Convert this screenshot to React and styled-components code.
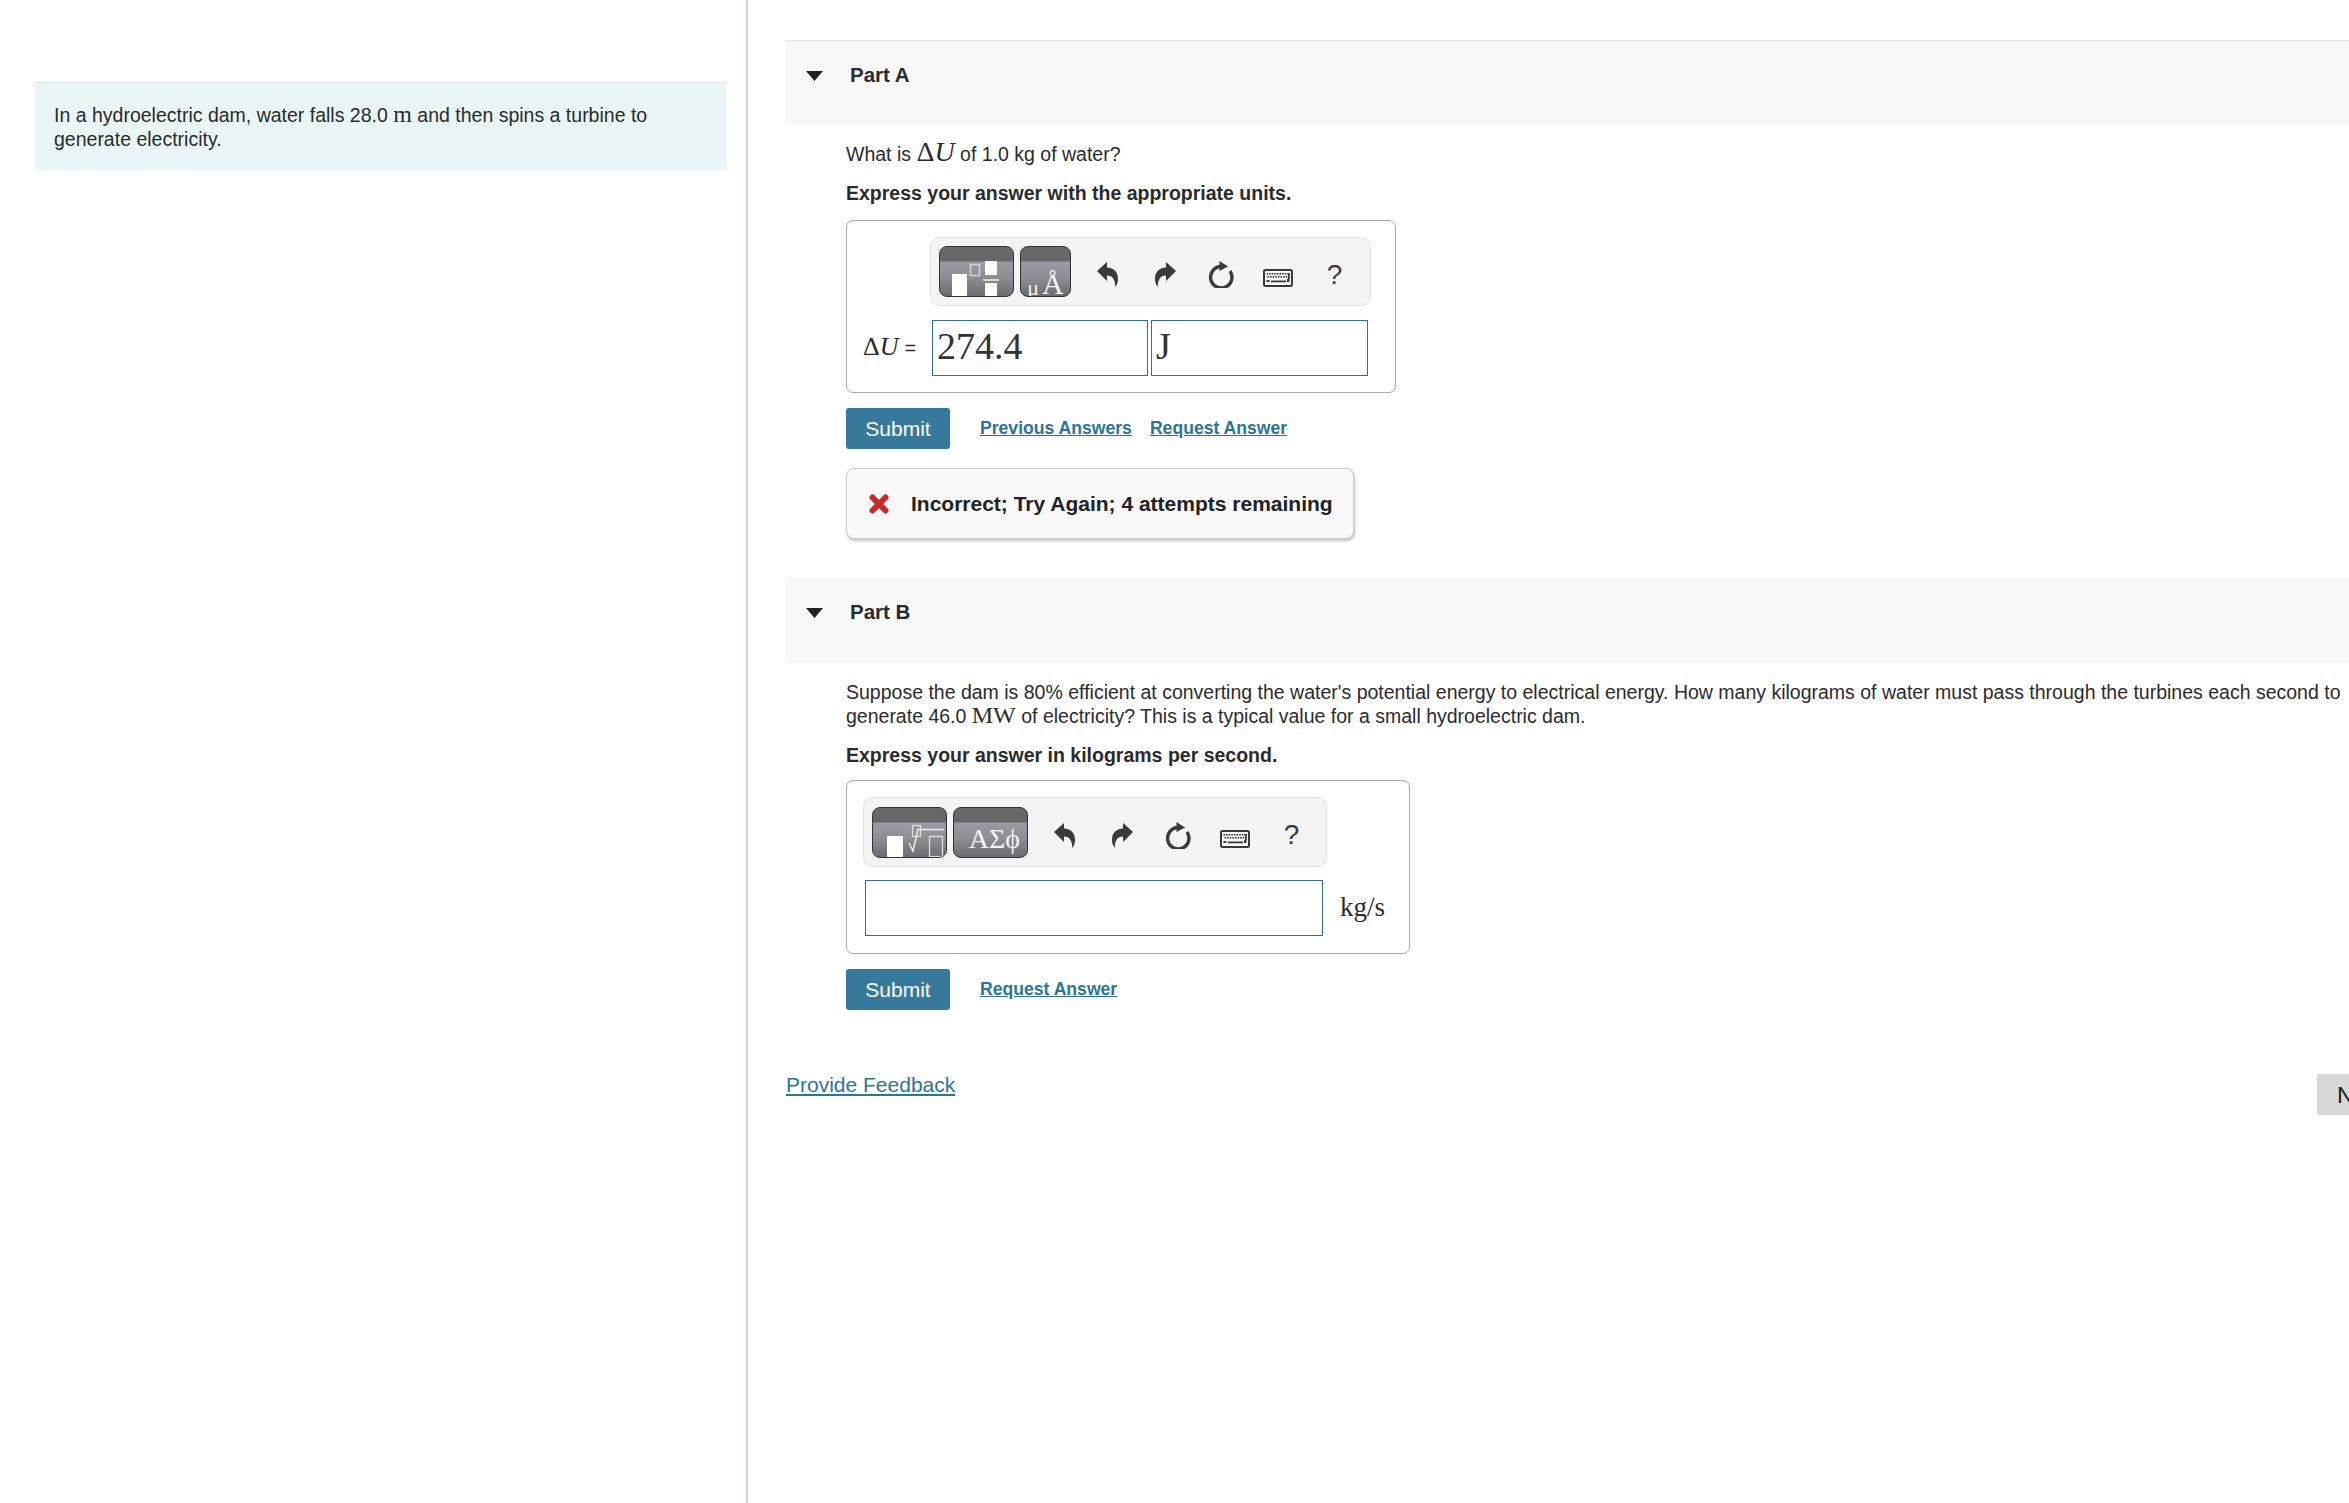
import React from "react";
import styled, { createGlobalStyle } from "styled-components";

const GlobalStyle = createGlobalStyle`
  html, body {
    margin: 0;
    padding: 0;
    background: #fff;
    overflow: hidden;
  }
  body {
    font-family: "Liberation Sans", Arial, sans-serif;
    font-size: 19.5px;
    line-height: 24px;
    color: #2b2b2b;
  }
`;

const Page = styled.div`
  display: flex;
  width: 2349px;
  height: 1503px;
  overflow: hidden;
`;

const Side = styled.aside`
  flex: 0 0 748px;
  box-sizing: border-box;
  height: 100%;
  padding: 82px 20px 0 35px;
  border-right: 2px solid #c6d8e4;
`;

const Intro = styled.div`
  box-sizing: border-box;
  height: 88px;
  padding: 20px 19px 0;
  background: #e9f5f7;
  border-top: 1px solid #dfe6e8;
`;

const Main = styled.main`
  flex: 0 0 1654px;
  padding: 40px 0 0 38px;
  box-sizing: border-box;
`;

const PartHeader = styled.div`
  display: flex;
  align-items: flex-start;
  gap: 27px;
  height: 85px;
  box-sizing: border-box;
  padding: 22px 0 0 20px;
  background: #f8f8f8;
  border-top: ${({ $ruled }) => ($ruled ? "1px solid #e0e2e2" : "none")};
  margin-top: ${({ $ruled }) => ($ruled ? "0" : "39px")};
  font-size: 20.5px;
  font-weight: bold;
  color: #2b2b2b;
`;

const Caret = styled.svg`
  width: 17px;
  height: 10px;
  margin-top: 8px;
  fill: #222;
`;

const PartBody = styled.div`
  padding: 17px 0 0 60px;
  width: 1500px;
`;

const Prompt = styled.p`
  margin: 0 0 15px;
`;

const Instruction = styled.p`
  margin: 0 0 ${({ $after }) => $after}px;
  font-weight: bold;
`;

const MathText = styled.span`
  font-family: "Liberation Serif", "Times New Roman", serif;
  font-size: ${({ $size }) => $size || "24px"};
  line-height: 0;
  font-style: ${({ $italic }) => ($italic ? "italic" : "normal")};
`;

const AnswerBox = styled.div`
  display: flex;
  flex-direction: column;
  gap: ${({ $gap }) => $gap}px;
  box-sizing: border-box;
  width: ${({ $width }) => $width}px;
  height: ${({ $height }) => $height}px;
  padding: 16px;
  border: 1px solid #aaa;
  border-radius: 7px;
`;

const Toolbar = styled.div`
  display: flex;
  align-items: center;
  gap: 6px;
  box-sizing: border-box;
  flex: none;
  width: ${({ $width }) => $width}px;
  height: ${({ $height }) => $height}px;
  margin-left: ${({ $indent }) => $indent || 0}px;
  padding: 0 8px;
  background: #f4f4f4;
  border: 1px solid #e2e2e2;
  border-radius: 10px;
`;

const TemplateButton = styled.div`
  display: flex;
  align-items: flex-end;
  justify-content: ${({ $align }) => $align || "center"};
  gap: ${({ $gap }) => $gap || 0}px;
  box-sizing: border-box;
  flex: 0 0 ${({ $width }) => $width}px;
  height: 51px;
  overflow: hidden;
  background: linear-gradient(#6a6a6a 0, #666 14px, #9b99a2 15px, #8f8e95 30px, #6c6b70 100%);
  border: 1px solid #333;
  border-radius: 8px;
  color: #f4f4f4;
  font-family: "Liberation Serif", "Times New Roman", serif;
`;

const TemplateArt = styled.svg`
  display: block;
  width: 100%;
  height: 100%;
`;

const UnitGlyph = styled.span`
  font-size: ${({ $size }) => $size}px;
  line-height: ${({ $line }) => $line}px;
  margin-bottom: ${({ $lift }) => $lift || 0}px;
`;

const ToolIcons = styled.div`
  display: grid;
  grid-template-columns: 59px 56px 56px 57px 57px;
  align-items: center;
  justify-items: center;
  height: 51px;
  margin-left: 1px;
  padding-top: 6px;
  box-sizing: border-box;
  color: #3a3a3a;
`;

const ToolIcon = styled.svg`
  display: block;
  width: ${({ $w }) => $w}px;
  height: ${({ $h }) => $h}px;
  margin-top: ${({ $top }) => $top || 0}px;
`;

const HelpMark = styled.span`
  font-size: 28px;
  line-height: 28px;
  color: #3a3a3a;
`;

const InputRow = styled.div`
  display: flex;
  align-items: center;
  height: 56px;
`;

const InputLabel = styled.div`
  flex: 0 0 69px;
  box-sizing: border-box;
  white-space: nowrap;
  display: flex;
  align-items: baseline;
  gap: 6px;
`;

const SmallEquals = styled.span`
  font-size: 20px;
`;

const Field = styled.div`
  box-sizing: border-box;
  flex: 0 0 ${({ $width }) => $width}px;
  height: 56px;
  margin-left: ${({ $gap }) => $gap || 0}px;
  padding-left: 4px;
  border: 1px solid #2f7299;
  font-family: "Liberation Serif", "Times New Roman", serif;
  font-size: 38px;
  line-height: 50px;
  color: #333;
`;

const UnitText = styled.span`
  margin: 0 0 2px 17px;
  font-family: "Liberation Serif", "Times New Roman", serif;
  font-size: 27px;
`;

const Actions = styled.div`
  display: flex;
  align-items: flex-start;
  margin-top: 15px;
`;

const SubmitButton = styled.button`
  width: 104px;
  height: 41px;
  padding: 0;
  border: none;
  border-radius: 3px;
  background: #37799c;
  color: #fff;
  font-family: inherit;
  font-size: 21px;
`;

const ActionLink = styled.a`
  margin: 8px 18px 0 0;
  font-size: 17.6px;
  font-weight: bold;
  color: #2b7598;
  text-decoration: underline;
  &:first-of-type {
    margin-left: 30px;
  }
`;

const Feedback = styled.div`
  display: flex;
  align-items: center;
  gap: 22px;
  box-sizing: border-box;
  width: 508px;
  height: 71px;
  margin-top: 19px;
  padding-left: 22px;
  background: #f9f9f9;
  border: 1px solid #ccc;
  border-radius: 8px;
  box-shadow: 1px 2px 3px rgba(0, 0, 0, 0.25);
  font-size: 21px;
  font-weight: bold;
  color: #222;
  white-space: nowrap;
`;

const CrossIcon = styled.svg`
  flex: none;
  width: 20px;
  height: 20px;
`;

const Footer = styled.div`
  display: flex;
  justify-content: space-between;
  align-items: flex-start;
  margin-top: 63px;
`;

const FeedbackLink = styled.a`
  font-size: 21px;
  color: #2b7598;
  text-decoration: underline;
`;

const NextButton = styled.button`
  width: 85px;
  height: 41px;
  margin-top: 1px;
  padding: 0 0 0 20px;
  text-align: left;
  border: none;
  border-radius: 3px;
  background: #d8d8d8;
  color: #222;
  font-family: "Inter", "Liberation Sans", sans-serif;
  font-size: 22px;
`;

function UndoIcon({ flip }) {
  return (
    <ToolIcon $w={21} $h={25} viewBox="0 0 21 25" fill="currentColor">
      <path
        transform={flip ? "translate(21 0) scale(-1 1)" : undefined}
        d="M0 9 L10 0 V5.5 C17 6 21 10 21 17 C21 20 20 23 18 25 C18.5 20 17 13.5 10 13.5 V19 Z"
      />
    </ToolIcon>
  );
}

function ResetIcon() {
  return (
    <ToolIcon $w={26} $h={27} viewBox="0 0 26 27">
      <path
        d="M13 5.5 A10.7 10.7 0 1 0 22 10"
        fill="none"
        stroke="currentColor"
        strokeWidth="3.4"
      />
      <path d="M11.5 0 L20 5.5 L11.5 10 Z" fill="currentColor" />
    </ToolIcon>
  );
}

function KeyboardIcon() {
  const keys = [];
  for (let i = 0; i < 9; i++) keys.push(<rect key={"a" + i} x={3.5 + i * 2.6} y="4" width="1.6" height="1.6" />);
  for (let i = 0; i < 8; i++) keys.push(<rect key={"b" + i} x={4.5 + i * 2.6} y="7" width="1.6" height="1.6" />);
  return (
    <ToolIcon $w={30} $h={18} $top={7} viewBox="0 0 30 18" fill="currentColor">
      <rect x="1" y="1" width="28" height="16" rx="1.5" fill="#fafafa" stroke="currentColor" strokeWidth="2" />
      {keys}
      <rect x="3.5" y="11" width="3" height="2" />
      <rect x="8" y="11.5" width="15" height="1.8" />
      <rect x="24" y="10" width="2.5" height="3" />
      <rect x="25" y="4" width="1.8" height="6" />
    </ToolIcon>
  );
}

function ToolGroup() {
  return (
    <ToolIcons>
      <UndoIcon />
      <UndoIcon flip />
      <ResetIcon />
      <KeyboardIcon />
      <HelpMark>?</HelpMark>
    </ToolIcons>
  );
}

function FractionArt() {
  return (
    <TemplateArt viewBox="0 0 73 49">
      <rect x="12" y="27" width="15" height="22" fill="#fff" />
      <rect x="30.5" y="17.5" width="9" height="11" fill="none" stroke="#d4d4d4" strokeWidth="1.5" />
      <rect x="45" y="14" width="12" height="14" fill="#fff" />
      <rect x="43" y="32" width="16" height="2" fill="#d8d8d8" />
      <rect x="45" y="36" width="12" height="13" fill="#fff" />
    </TemplateArt>
  );
}

function RadicalArt() {
  return (
    <TemplateArt viewBox="0 0 73 49">
      <rect x="14" y="28" width="16" height="21" fill="#fff" />
      <rect x="39.5" y="17.5" width="8" height="11" fill="none" stroke="#ddd" strokeWidth="1.3" />
      <path d="M36 35 L40 43 L45 21.5 H71" fill="none" stroke="#eee" strokeWidth="1.5" />
      <rect x="56.5" y="28.5" width="13" height="20" fill="none" stroke="#ddd" strokeWidth="1.3" />
    </TemplateArt>
  );
}

export default function App() {
  return (
    <>
      <GlobalStyle />
      <Page>
        <Side>
          <Intro>
            In a hydroelectric dam, water falls 28.0 <MathText>m</MathText> and then spins a turbine to
            generate electricity.
          </Intro>
        </Side>
        <Main>
          <PartHeader $ruled>
            <Caret viewBox="0 0 17 10"><path d="M0 0 H17 L8.5 10 Z" /></Caret>
            <span>Part A</span>
          </PartHeader>
          <PartBody>
            <Prompt>
              What is <MathText $size="28px">Δ</MathText><MathText $size="28px" $italic>U</MathText> of 1.0 kg of water?
            </Prompt>
            <Instruction $after={15}>Express your answer with the appropriate units.</Instruction>
            <AnswerBox $width={550} $height={173} $gap={14}>
              <Toolbar $width={441} $height={69} $indent={67}>
                <TemplateButton $width={75}><FractionArt /></TemplateButton>
                <TemplateButton $width={51} $gap={3}>
                  <UnitGlyph $size={22} $line={16}>μ</UnitGlyph>
                  <UnitGlyph $size={30} $line={24}>Å</UnitGlyph>
                </TemplateButton>
                <ToolGroup />
              </Toolbar>
              <InputRow>
                <InputLabel>
                  <MathText $size="26px">Δ<MathText $size="26px" $italic>U</MathText></MathText>
                  <SmallEquals>=</SmallEquals>
                </InputLabel>
                <Field $width={216}>274.4</Field>
                <Field $width={217} $gap={3}>J</Field>
              </InputRow>
            </AnswerBox>
            <Actions>
              <SubmitButton>Submit</SubmitButton>
              <ActionLink>Previous Answers</ActionLink>
              <ActionLink>Request Answer</ActionLink>
            </Actions>
            <Feedback>
              <CrossIcon viewBox="0 0 20 20">
                <path d="M3.5 3.5 L16.5 16.5 M16.5 3.5 L3.5 16.5" stroke="#c9282d" strokeWidth="6" strokeLinecap="round" />
              </CrossIcon>
              Incorrect; Try Again; 4 attempts remaining
            </Feedback>
          </PartBody>

          <PartHeader>
            <Caret viewBox="0 0 17 10"><path d="M0 0 H17 L8.5 10 Z" /></Caret>
            <span>Part B</span>
          </PartHeader>
          <PartBody>
            <Prompt>
              Suppose the dam is 80% efficient at converting the water's potential energy to electrical energy. How many kilograms of water must pass through the turbines each second to
              generate 46.0 <MathText>MW</MathText> of electricity? This is a typical value for a small hydroelectric dam.
            </Prompt>
            <Instruction $after={13}>Express your answer in kilograms per second.</Instruction>
            <AnswerBox $width={564} $height={174} $gap={13}>
              <Toolbar $width={464} $height={70}>
                <TemplateButton $width={75}><RadicalArt /></TemplateButton>
                <TemplateButton $width={75} $align="flex-end">
                  <UnitGlyph $size={28} $line={28} $lift={4}>ΑΣϕ&nbsp;</UnitGlyph>
                </TemplateButton>
                <ToolGroup />
              </Toolbar>
              <InputRow>
                <Field $width={458} $gap={2} />
                <UnitText>kg/s</UnitText>
              </InputRow>
            </AnswerBox>
            <Actions>
              <SubmitButton>Submit</SubmitButton>
              <ActionLink>Request Answer</ActionLink>
            </Actions>
          </PartBody>
          <Footer>
            <FeedbackLink>Provide Feedback</FeedbackLink>
            <NextButton>Next</NextButton>
          </Footer>
        </Main>
      </Page>
    </>
  );
}
